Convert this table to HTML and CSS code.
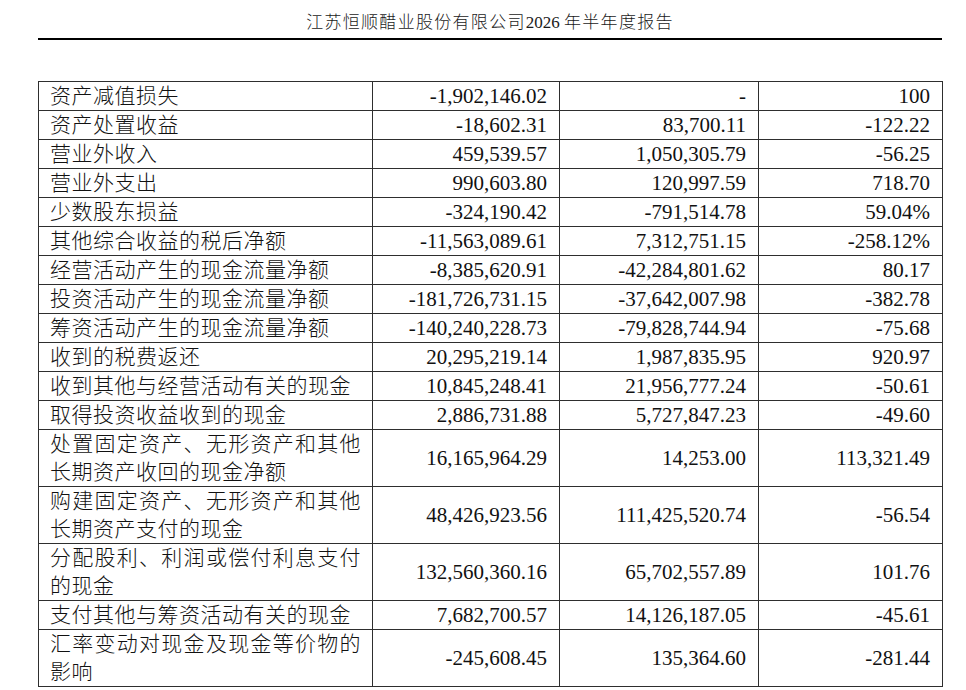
FILE: index.html
```html
<!DOCTYPE html>
<html lang="zh-CN">
<head>
<meta charset="utf-8">
<title>江苏恒顺醋业股份有限公司2026 年半年度报告</title>
<link rel="stylesheet" href="styles.css">
</head>
<body>
<div class="page">
  <header class="doc-header">
    <span class="title">江苏恒顺醋业股份有限公司<span class="num">2026 </span>年半年度报告</span>
  </header>
  <table class="fin-table">
    <colgroup>
      <col class="c-name">
      <col class="c-a">
      <col class="c-b">
      <col class="c-c">
    </colgroup>
    <tbody>
      <tr><td class="name">资产减值损失</td><td>-1,902,146.02</td><td>-</td><td>100</td></tr>
      <tr><td class="name">资产处置收益</td><td>-18,602.31</td><td>83,700.11</td><td>-122.22</td></tr>
      <tr><td class="name">营业外收入</td><td>459,539.57</td><td>1,050,305.79</td><td>-56.25</td></tr>
      <tr><td class="name">营业外支出</td><td>990,603.80</td><td>120,997.59</td><td>718.70</td></tr>
      <tr><td class="name">少数股东损益</td><td>-324,190.42</td><td>-791,514.78</td><td>59.04%</td></tr>
      <tr><td class="name">其他综合收益的税后净额</td><td>-11,563,089.61</td><td>7,312,751.15</td><td>-258.12%</td></tr>
      <tr><td class="name">经营活动产生的现金流量净额</td><td>-8,385,620.91</td><td>-42,284,801.62</td><td>80.17</td></tr>
      <tr><td class="name">投资活动产生的现金流量净额</td><td>-181,726,731.15</td><td>-37,642,007.98</td><td>-382.78</td></tr>
      <tr><td class="name">筹资活动产生的现金流量净额</td><td>-140,240,228.73</td><td>-79,828,744.94</td><td>-75.68</td></tr>
      <tr><td class="name">收到的税费返还</td><td>20,295,219.14</td><td>1,987,835.95</td><td>920.97</td></tr>
      <tr><td class="name">收到其他与经营活动有关的现金</td><td>10,845,248.41</td><td>21,956,777.24</td><td>-50.61</td></tr>
      <tr><td class="name">取得投资收益收到的现金</td><td>2,886,731.88</td><td>5,727,847.23</td><td>-49.60</td></tr>
      <tr><td class="name">处置固定资产、无形资产和其他长期资产收回的现金净额</td><td>16,165,964.29</td><td>14,253.00</td><td>113,321.49</td></tr>
      <tr><td class="name">购建固定资产、无形资产和其他长期资产支付的现金</td><td>48,426,923.56</td><td>111,425,520.74</td><td>-56.54</td></tr>
      <tr><td class="name">分配股利、利润或偿付利息支付的现金</td><td>132,560,360.16</td><td>65,702,557.89</td><td>101.76</td></tr>
      <tr><td class="name">支付其他与筹资活动有关的现金</td><td>7,682,700.57</td><td>14,126,187.05</td><td>-45.61</td></tr>
      <tr><td class="name">汇率变动对现金及现金等价物的影响</td><td>-245,608.45</td><td>135,364.60</td><td>-281.44</td></tr>
    </tbody>
  </table>
</div>
</body>
</html>
```

FILE: styles.css
```css
html, body {
  margin: 0;
  padding: 0;
  background: #ffffff;
}

body {
  font-family: "Liberation Serif", "Noto Sans CJK SC", serif;
  color: #111111;
}

.page {
  width: 904px;
  margin-left: 38px;
}

.doc-header {
  text-align: center;
  padding-top: 12px;
  padding-bottom: 4px;
  border-bottom: 2px solid #000000;
  line-height: 22px;
}

.title {
  font-size: 17px;
  font-weight: 300;
  letter-spacing: 1.3px;
  color: #1a1a1a;
}

.title .num {
  letter-spacing: 0;
  font-weight: 400;
}

.fin-table {
  margin-top: 41px;
  width: 904px;
  border-collapse: collapse;
  table-layout: fixed;
}

.c-name { width: 334px; }
.c-a { width: 187px; }
.c-b { width: 199px; }
.c-c { width: 184px; }

.fin-table td {
  border: 1px solid #2e2e2e;
  padding: 0 12px 0 8px;
  font-size: 21px;
  line-height: 28px;
  text-align: right;
  vertical-align: middle;
  color: #111111;
  white-space: nowrap;
}

.fin-table td.name {
  padding: 0 11px 0 11px;
  text-align: justify;
  text-align-last: left;
  letter-spacing: 0.5px;
  white-space: normal;
  font-size: 21px;
  font-weight: 300;
}
```
